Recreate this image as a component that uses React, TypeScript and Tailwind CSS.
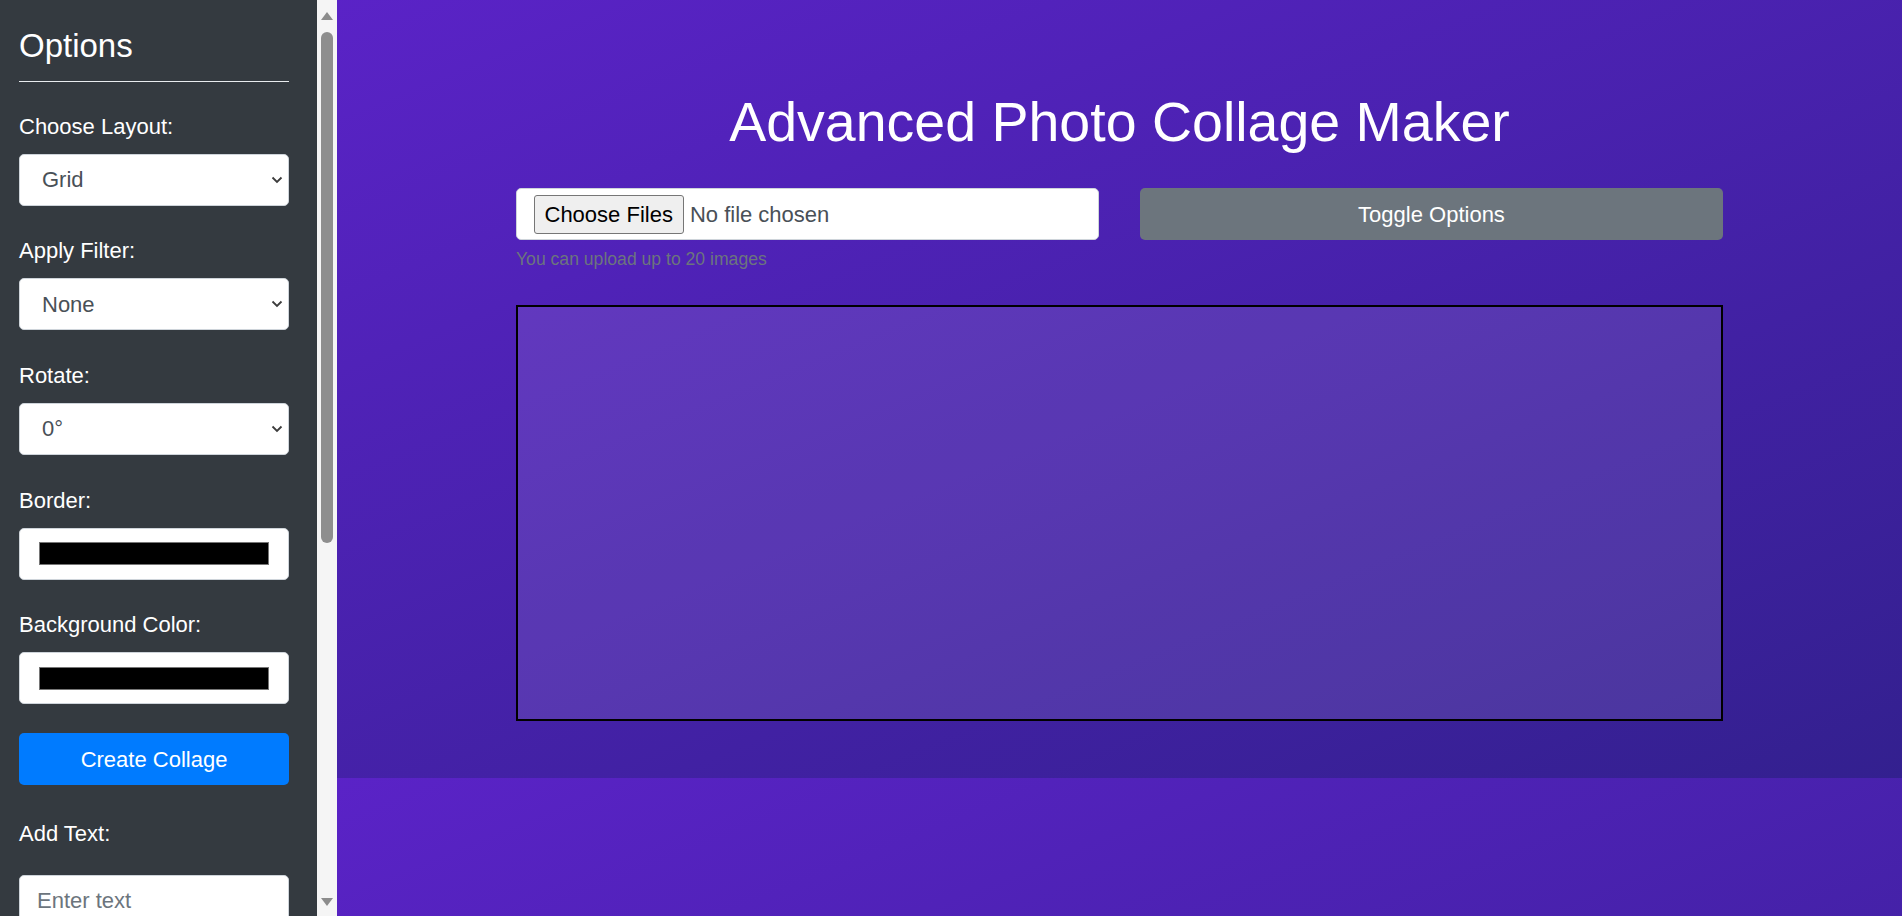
import React, { useState } from 'react';

const LAYOUTS = ['Grid', 'Masonry', 'Horizontal', 'Vertical'];
const FILTERS = ['None', 'Grayscale', 'Sepia', 'Blur', 'Brightness'];
const ROTATIONS = ['0°', '90°', '180°', '270°'];

const Label: React.FC<{ children: React.ReactNode }> = ({ children }) => (
  <label className="mb-[11px] block text-[22px] leading-[33px] text-white">{children}</label>
);

const SelectBox: React.FC<{ options: string[] }> = ({ options }) => (
  <div className="relative h-[52px] w-[270px]">
    <select
      defaultValue={options[0]}
      className="h-full w-full appearance-none rounded-[5px] border border-[#ced4da] bg-white pl-[22px] text-[22px] text-[#495057] outline-none"
    >
      {options.map((o) => (
        <option key={o}>{o}</option>
      ))}
    </select>
    <svg
      className="pointer-events-none absolute right-[6px] top-1/2 -translate-y-1/2"
      width="12"
      height="8"
      viewBox="0 0 12 8"
      fill="none"
    >
      <path d="M1.5 1.5 L6 6 L10.5 1.5" stroke="#3c3c3c" strokeWidth="1.8" />
    </svg>
  </div>
);

const ColorBox: React.FC<{ color: string }> = ({ color }) => (
  <div className="flex h-[52px] w-[270px] items-center rounded-[5px] border border-[#ced4da] bg-white px-[19px]">
    <div className="h-[23px] w-full border border-[#767676]" style={{ background: color }} />
  </div>
);

const Group: React.FC<{ label: string; children: React.ReactNode }> = ({ label, children }) => (
  <div className="mb-[28.7px]">
    <Label>{label}</Label>
    {children}
  </div>
);

// fake classic scrollbar, the reference shows the arrowed kind
const Scrollbar = () => (
  <div className="flex h-full w-[20px] shrink-0 flex-col items-center bg-[#f5f5f5]">
    <svg className="mt-[12px]" width="12" height="8" viewBox="0 0 12 8">
      <path d="M6 0 L12 8 L0 8 Z" fill="#8c8c8c" />
    </svg>
    <div className="mt-[12px] h-[511px] w-[12px] rounded-full bg-[#8e8e8e]" />
    <div className="flex-1" />
    <svg className="mb-[10px]" width="12" height="8" viewBox="0 0 12 8">
      <path d="M0 0 L12 0 L6 8 Z" fill="#8c8c8c" />
    </svg>
  </div>
);

export default function App() {
  const [showOptions, setShowOptions] = useState(true);

  return (
    <div className="flex h-screen w-full overflow-hidden bg-[linear-gradient(to_bottom_right,#5e23cc,#33208f)] bg-[length:100%_778px] bg-repeat-y font-['Liberation_Sans',Arial,sans-serif]">
      {showOptions && (
        <aside className="flex h-full w-[337px] shrink-0 bg-[#343a40]">
          <div className="h-full w-[317px] overflow-hidden pl-[19px] pt-[26px]">
            <h4 className="text-[33px] font-normal leading-[39.6px] text-white">Options</h4>
            <hr className="mt-[15px] w-[270px] border-t border-[#e9ecef]" />
            <div className="mt-[28px]">
              <Group label="Choose Layout:">
                <SelectBox options={LAYOUTS} />
              </Group>
              <Group label="Apply Filter:">
                <SelectBox options={FILTERS} />
              </Group>
              <Group label="Rotate:">
                <SelectBox options={ROTATIONS} />
              </Group>
              <Group label="Border:">
                <ColorBox color="#000000" />
              </Group>
              <Group label="Background Color:">
                <ColorBox color="#000000" />
              </Group>
            </div>
            <button className="mb-[32px] h-[52px] w-[270px] rounded-[5px] bg-[#007bff] text-[22px] text-white">
              Create Collage
            </button>
            <label className="mb-[25px] block text-[22px] leading-[33px] text-white">Add Text:</label>
            <input
              type="text"
              placeholder="Enter text"
              className="h-[52px] w-[270px] rounded-[5px] border border-[#ced4da] bg-white pl-[17px] text-[22px] text-[#495057] outline-none placeholder:text-[#6c757d]"
            />
          </div>
          <Scrollbar />
        </aside>
      )}

      <main className="flex flex-1 flex-col items-center">
        <h1 className="mt-[89px] text-[55.5px] font-normal leading-[66px] text-white">
          Advanced Photo Collage Maker
        </h1>

        <div className="mt-[33px] flex w-[1207px] gap-[41px]">
          <div className="w-[583px]">
            <div className="flex h-[52px] items-center rounded-[5px] border border-[#ced4da] bg-white pl-[16.5px]">
              <button className="h-[39px] rounded-[3px] border border-[#767676] bg-[#efefef] px-[10px] text-[22px] text-black">
                Choose Files
              </button>
              <span className="ml-[6px] text-[22px] text-[#495057]">No file chosen</span>
            </div>
            <p className="mt-[6px] text-[17.6px] leading-[26.4px] text-[#6c757d]">
              You can upload up to 20 images
            </p>
          </div>
          <button
            onClick={() => setShowOptions(!showOptions)}
            className="h-[52px] w-[583px] rounded-[5px] bg-[#6c757d] text-[22px] text-white"
          >
            Toggle Options
          </button>
        </div>

        <div className="mt-[33px] h-[416px] w-[1207px] border-2 border-black bg-white/10" />
      </main>
    </div>
  );
}
